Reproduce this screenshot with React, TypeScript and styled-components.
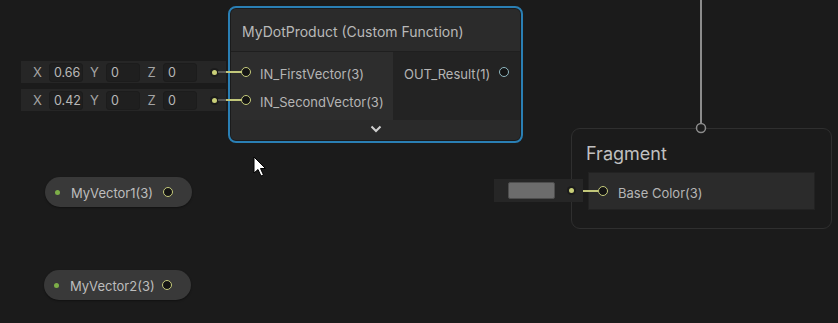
import styled, { createGlobalStyle } from 'styled-components';

const GlobalStyle = createGlobalStyle`
  html, body {
    margin: 0;
    background: #1b1b1b;
  }
  body {
    font-family: Inter, "Noto Sans", "Liberation Sans", sans-serif;
  }
`;

type Vec = { x: string; y: string; z: string; top: number };

const vectorInputs: Vec[] = [
  { x: '0.66', y: '0', z: '0', top: 61 },
  { x: '0.42', y: '0', z: '0', top: 89 },
];

const properties = [
  { name: 'MyVector1(3)', left: 45, top: 177 },
  { name: 'MyVector2(3)', left: 44, top: 270 },
];

const Port = ({ $tint = 'yellow' }: { $tint?: 'yellow' | 'teal' | 'grey' }) => <PortRing $tint={$tint} />;

export default function App() {
  return (
    <>
      <GlobalStyle />
      <Canvas>
        {vectorInputs.map((v) => (
          <InlineInput key={v.top} style={{ top: v.top }}>
            <AxisLabel $first>X</AxisLabel>
            <Field>{v.x}</Field>
            <AxisLabel>Y</AxisLabel>
            <Field>{v.y}</Field>
            <AxisLabel>Z</AxisLabel>
            <Field>{v.z}</Field>
            <SlotDot />
          </InlineInput>
        ))}

        <CustomNode>
          <NodeInner>
            <NodeTitle>MyDotProduct (Custom Function)</NodeTitle>
            <PortArea>
              <Inputs>
                <PortRow>
                  <Port />
                  <PortLabel>IN_FirstVector(3)</PortLabel>
                </PortRow>
                <PortRow>
                  <Port />
                  <PortLabel>IN_SecondVector(3)</PortLabel>
                </PortRow>
              </Inputs>
              <Outputs>
                <PortRow $out>
                  <PortLabel>OUT_Result(1)</PortLabel>
                  <Port $tint="teal" />
                </PortRow>
              </Outputs>
            </PortArea>
            <Collapse>
              <svg width="12" height="8" viewBox="0 0 12 8">
                <path d="M1.5 1.5 L6 6 L10.5 1.5" fill="none" stroke="#cfcfcf" strokeWidth="2" />
              </svg>
            </Collapse>
          </NodeInner>
        </CustomNode>

        {properties.map((p) => (
          <PropertyPill key={p.name} style={{ left: p.left, top: p.top }}>
            <PropDot />
            <PropName>{p.name}</PropName>
            <Port />
          </PropertyPill>
        ))}

        <ColorInput>
          <Swatch />
          <SlotDot />
        </ColorInput>

        <FragmentNode>
          <FragmentTitle>Fragment</FragmentTitle>
          <BlockRow>
            <Port />
            <PortLabel>Base Color(3)</PortLabel>
          </BlockRow>
        </FragmentNode>

        <Wires width="838" height="323" viewBox="0 0 838 323">
          <line x1="701" y1="0" x2="701" y2="123" stroke="#8c8c8c" strokeWidth="2" />
          <circle cx="701" cy="128" r="4.5" fill="#1b1b1b" stroke="#8c8c8c" strokeWidth="1.5" />
          {[72, 100].map((y) => (
            <g key={y}>
              <line x1="218" y1={y} x2="226" y2={y} stroke="#565656" strokeWidth="2" />
              <line x1="226" y1={y} x2="242" y2={y} stroke="#c2c77a" strokeWidth="2" />
            </g>
          ))}
          <line x1="575" y1="191" x2="583" y2="191" stroke="#565656" strokeWidth="2" />
          <line x1="583" y1="191" x2="598" y2="191" stroke="#c2c77a" strokeWidth="2" />
          <path
            d="M254 157 L254 173 L258 169.5 L261 176 L263.5 175 L260.5 168.5 L265.5 168.5 Z"
            fill="#ffffff"
            stroke="#000000"
            strokeWidth="1"
            strokeLinejoin="miter"
          />
        </Wires>
      </Canvas>
    </>
  );
}

const Canvas = styled.div`
  position: relative;
  width: 838px;
  height: 323px;
  overflow: hidden;
  background: #1b1b1b;
`;

const Wires = styled.svg`
  position: absolute;
  inset: 0;
  pointer-events: none;
`;

const PortRing = styled.span<{ $tint: 'yellow' | 'teal' | 'grey' }>`
  display: block;
  box-sizing: border-box;
  width: 10px;
  height: 10px;
  flex-shrink: 0;
  border-radius: 50%;
  background: #141414;
  border: 1.5px solid
    ${({ $tint }) => ($tint === 'teal' ? '#8fb7c0' : $tint === 'grey' ? '#8c8c8c' : '#c6cb7c')};
`;

const InlineInput = styled.div`
  position: absolute;
  left: 21px;
  width: 205px;
  height: 22px;
  box-sizing: border-box;
  display: flex;
  align-items: center;
  background: #262626;
  font-size: 12.5px;
`;

const AxisLabel = styled.span<{ $first?: boolean }>`
  width: 23px;
  padding-left: ${({ $first }) => ($first ? '5px' : '0')};
  text-align: center;
  color: #a4a4a4;
  font-size: 13px;
`;

const Field = styled.span`
  box-sizing: border-box;
  width: 34px;
  height: 19px;
  display: flex;
  align-items: center;
  padding-left: 4px;
  background: #1f1f1f;
  border: 1px solid #1c1c1c;
  border-radius: 3px;
  color: #b8b8b8;
`;

const SlotDot = styled.span`
  margin-left: auto;
  margin-right: 7px;
  width: 9px;
  height: 9px;
  border-radius: 50%;
  background: #1b1b1b;
  display: flex;
  align-items: center;
  justify-content: center;

  &::after {
    content: '';
    width: 5px;
    height: 5px;
    border-radius: 50%;
    background: #c9cf78;
  }
`;

const CustomNode = styled.div`
  position: absolute;
  left: 228px;
  top: 6px;
  width: 295px;
  height: 137px;
  box-sizing: border-box;
  padding: 1px;
  border: 2px solid #2a7fb4;
  border-radius: 8px;
`;

const NodeInner = styled.div`
  display: flex;
  flex-direction: column;
  height: 100%;
  border-radius: 5px;
  overflow: hidden;
  background: #262626;
`;

const NodeTitle = styled.div`
  height: 43px;
  flex-shrink: 0;
  display: flex;
  align-items: center;
  padding: 2px 0 0 11px;
  background: #2b2b2b;
  border-bottom: 1px solid #1f1f1f;
  box-sizing: border-box;
  color: #b9b9b9;
  font-size: 14px;
`;

const PortArea = styled.div`
  display: flex;
  height: 68px;
`;

const Inputs = styled.div`
  width: 162px;
  flex-shrink: 0;
  padding-top: 6px;
  box-sizing: border-box;
  background: #2d2d2d;
`;

const Outputs = styled.div`
  flex: 1;
  padding-top: 6px;
  background: #232323;
`;

const PortRow = styled.div<{ $out?: boolean }>`
  height: 28px;
  display: flex;
  align-items: center;
  gap: 9px;
  padding: ${({ $out }) => ($out ? '0 12px 0 11px' : '0 0 0 10px')};
  justify-content: ${({ $out }) => ($out ? 'space-between' : 'flex-start')};
`;

const PortLabel = styled.span`
  padding-top: 3px;
  color: #b5b5b5;
  font-size: 13px;
  white-space: nowrap;
`;

const Collapse = styled.div`
  flex: 1;
  display: flex;
  align-items: center;
  justify-content: center;
  background: #2a2a2a;
  padding-bottom: 2px;
`;

const PropertyPill = styled.div`
  position: absolute;
  width: 147px;
  height: 30px;
  box-sizing: border-box;
  display: flex;
  align-items: center;
  padding: 0 19px 0 10px;
  border-radius: 15px;
  background: #393939;
  box-shadow: 0 1px 2px rgba(0, 0, 0, 0.4);
`;

const PropDot = styled.span`
  width: 5px;
  height: 5px;
  border-radius: 50%;
  background: #7dae48;
  flex-shrink: 0;
`;

const PropName = styled.span`
  flex: 1;
  margin-left: 11px;
  padding-top: 2px;
  color: #bdbdbd;
  font-size: 13px;
`;

const ColorInput = styled.div`
  position: absolute;
  left: 494px;
  top: 179px;
  width: 89px;
  height: 23px;
  box-sizing: border-box;
  display: flex;
  align-items: center;
  padding-left: 14px;
  background: #262626;
  z-index: 1;
`;

const Swatch = styled.span`
  width: 47px;
  height: 17px;
  box-sizing: border-box;
  background: #6c6c6c;
  border: 1px solid #4d4d4d;
  border-radius: 2px;
`;

const FragmentNode = styled.div`
  position: absolute;
  left: 571px;
  top: 128px;
  width: 261px;
  height: 101px;
  box-sizing: border-box;
  padding: 0 16px;
  border: 1px solid #2f2f2f;
  border-radius: 9px;
  background: #1b1b1b;
`;

const FragmentTitle = styled.div`
  height: 43px;
  display: flex;
  align-items: center;
  margin-left: -2px;
  padding-top: 5px;
  box-sizing: border-box;
  color: #c0c0c0;
  font-size: 18px;
`;

const BlockRow = styled.div`
  height: 38px;
  display: flex;
  align-items: center;
  gap: 10px;
  padding-left: 9px;
  background: #2b2b2b;
  border: 1px solid #222222;
  box-sizing: border-box;
`;
